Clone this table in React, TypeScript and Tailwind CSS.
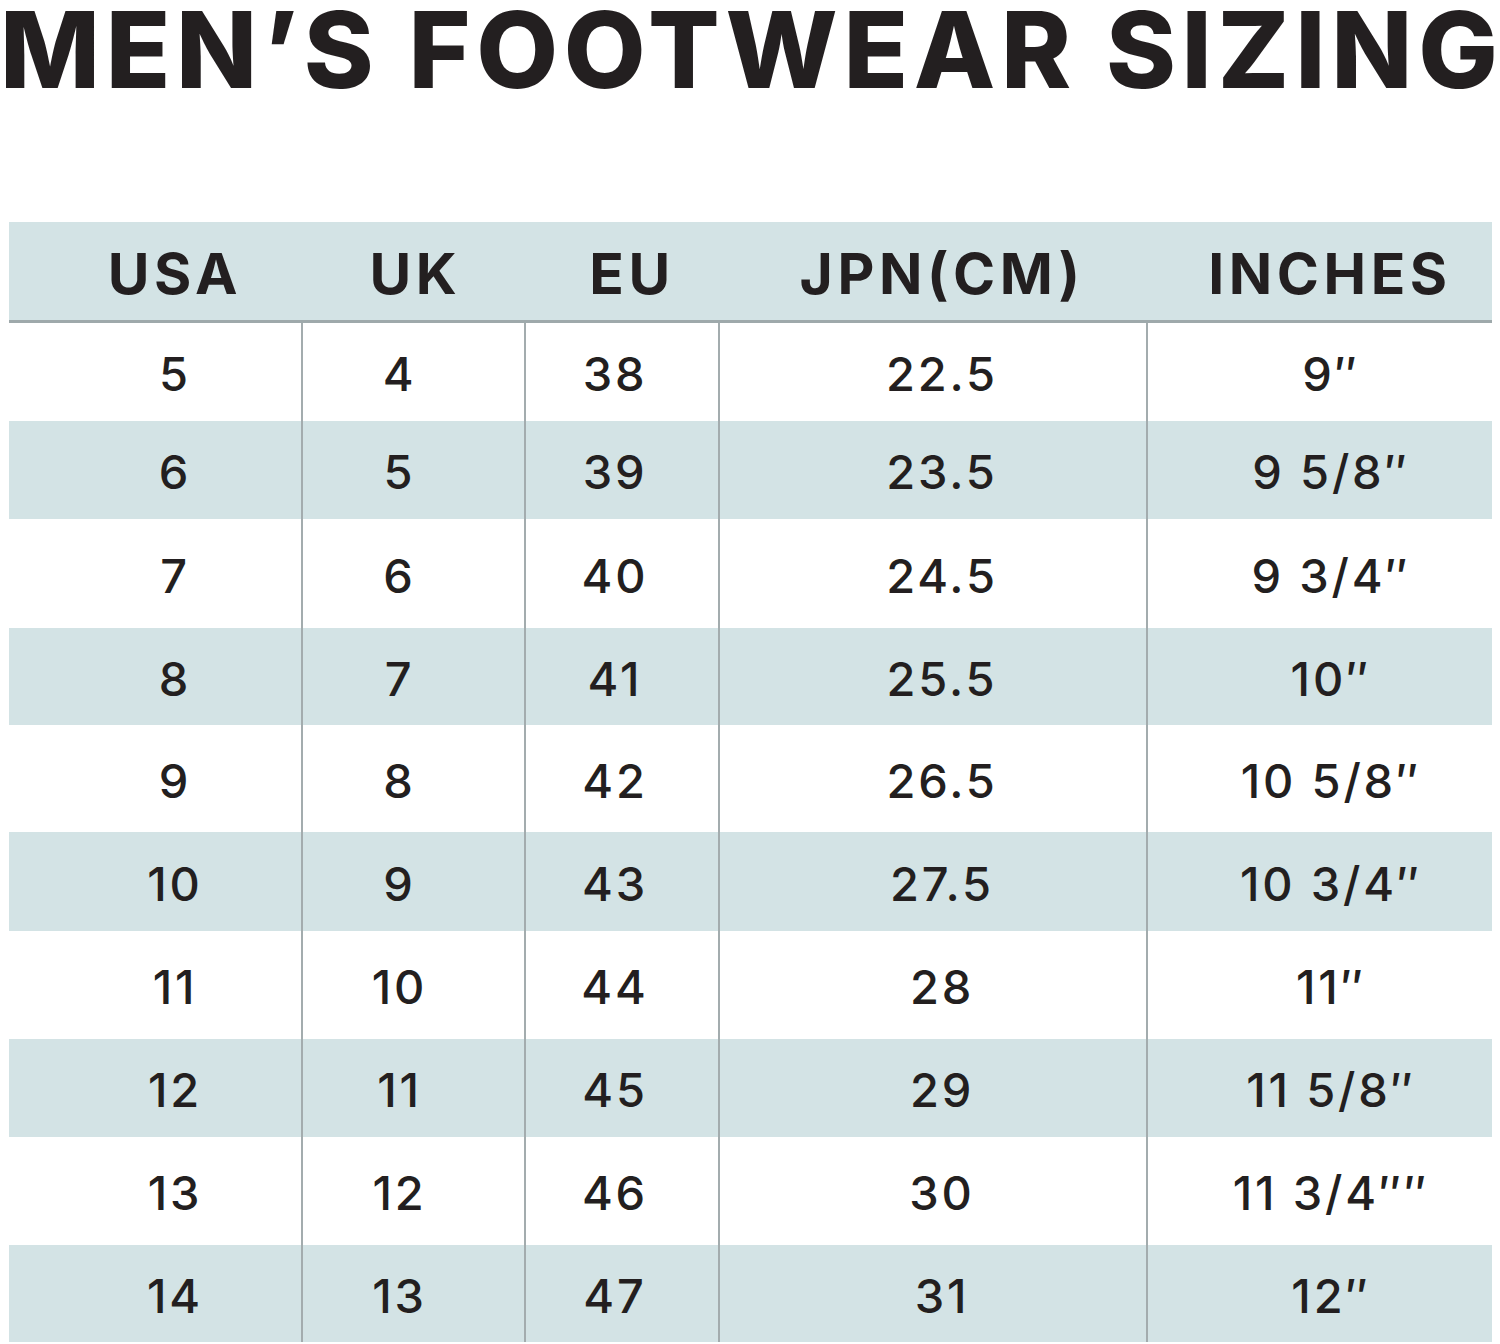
const rows = [
  { h: "h-[98px]", cells: ["5", "4", "38", "22.5", "9\u2033"] },
  { h: "h-[98px]", cells: ["6", "5", "39", "23.5", "9 5/8\u2033"] },
  { h: "h-[109px]", cells: ["7", "6", "40", "24.5", "9 3/4\u2033"] },
  { h: "h-[97px]", cells: ["8", "7", "41", "25.5", "10\u2033"] },
  { h: "h-[107px]", cells: ["9", "8", "42", "26.5", "10 5/8\u2033"] },
  { h: "h-[99px]", cells: ["10", "9", "43", "27.5", "10 3/4\u2033"] },
  { h: "h-[108px]", cells: ["11", "10", "44", "28", "11\u2033"] },
  { h: "h-[98px]", cells: ["12", "11", "45", "29", "11 5/8\u2033"] },
  { h: "h-[108px]", cells: ["13", "12", "46", "30", "11 3/4\u2033\u2033"] },
  { h: "h-[97px]", cells: ["14", "13", "47", "31", "12\u2033"] },
];

// column widths and text nudges, taken off the picture
const cols = [
  "w-[292px] pl-[40px]",
  "w-[223px] pr-[28px] border-l-2 border-[#a3acae]",
  "w-[194px] pr-[14px] border-l-2 border-[#a3acae]",
  "w-[428px] pl-[18px] border-l-2 border-[#a3acae]",
  "w-[346px] pl-[22px] border-l-2 border-[#a3acae]",
];

const headers = [
  { label: "USA", cls: "w-[292px] pl-[40px]" },
  { label: "UK", cls: "w-[223px] pl-[6px]" },
  { label: "EU", cls: "w-[194px] pl-[22px]" },
  { label: "JPN(CM)", cls: "w-[428px] pl-[20px]" },
  { label: "INCHES", cls: "w-[346px] pl-[22px]" },
];

export default function App() {
  return (
    <div
      className="w-[1500px] h-[1344px] bg-white text-[#231f20] overflow-hidden"
      style={{ fontFamily: "Inter, 'Liberation Sans', sans-serif" }}
    >
      <h1 className="h-[222px] text-[106px] leading-[100px] font-extrabold tracking-[0.054em] whitespace-nowrap">
        MEN’S FOOTWEAR SIZING
      </h1>

      <div className="ml-[9px] w-[1483px]">
        <div className="flex h-[101px] pt-[6px] bg-[#d3e3e5] border-b-[3px] border-[#9ea9ab]">
          {headers.map((c) => (
            <div
              key={c.label}
              className={`${c.cls} flex items-center justify-center text-[57px] font-bold tracking-[0.08em]`}
            >
              {c.label}
            </div>
          ))}
        </div>

        {rows.map((r, i) => (
          <div key={i} className={`flex ${r.h} ${i % 2 === 1 ? "bg-[#d3e3e5]" : "bg-white"}`}>
            {r.cells.map((v, j) => (
              <div
                key={j}
                className={`${cols[j]} flex items-center justify-center pt-[5px] text-[47px] font-medium tracking-[0.06em]`}
              >
                {v}
              </div>
            ))}
          </div>
        ))}
      </div>
    </div>
  );
}
